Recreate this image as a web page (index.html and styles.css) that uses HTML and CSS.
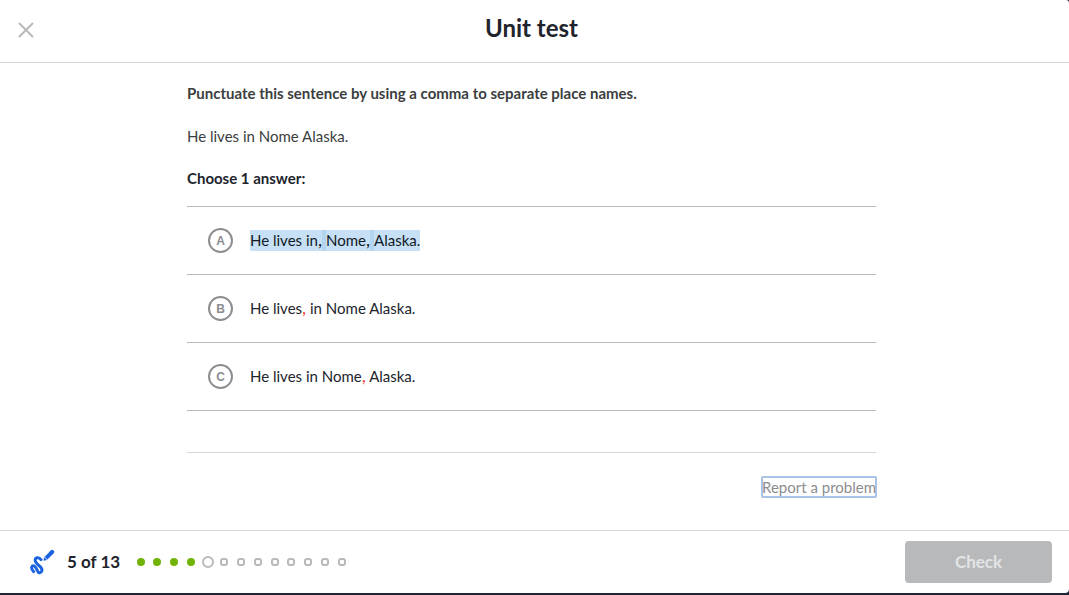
FILE: index.html
```html
<!DOCTYPE html>
<html lang="en">
<head>
<meta charset="utf-8">
<meta name="viewport" content="width=device-width, initial-scale=1">
<title>Unit test</title>
<link rel="stylesheet" href="styles.css">
</head>
<body>
<div class="page">
  <header class="header">
    <button class="close" type="button" aria-label="Close">
      <svg width="16" height="16" viewBox="0 0 16 16" fill="none" stroke="currentColor" stroke-width="2" stroke-linecap="round"><path d="M1.5 1.5l13 13M14.5 1.5l-13 13"/></svg>
    </button>
    <h1 class="title">Unit test</h1>
  </header>

  <main class="main">
    <form class="exercise" id="exercise">
      <p class="prompt">Punctuate this sentence by using a comma to separate place names.</p>
      <p class="sentence">He lives in Nome Alaska.</p>
      <fieldset class="choices">
        <legend class="instructions">Choose 1 answer:</legend>
        <label class="choice">
          <span class="marker"><input class="radio" type="radio" name="answer"><span class="letter">A</span></span>
          <span class="answer"><span class="selected">He lives in<span class="comma-wide">,</span><span class="overlap"> </span>Nome<span class="comma-wide">,</span><span class="overlap"> </span>Alaska.</span></span>
        </label>
        <label class="choice">
          <span class="marker"><input class="radio" type="radio" name="answer"><span class="letter">B</span></span>
          <span class="answer">He lives<span class="comma">,</span> in Nome Alaska.</span>
        </label>
        <label class="choice">
          <span class="marker"><input class="radio" type="radio" name="answer"><span class="letter">C</span></span>
          <span class="answer">He lives in Nome<span class="comma">,</span> Alaska.</span>
        </label>
      </fieldset>
      <div class="report-row"><a class="report" href="#report">Report a problem</a></div>
    </form>
  </main>

  <footer class="footer">
    <button class="scratchpad" type="button" aria-label="Show scratchpad">
      <svg width="26" height="28" viewBox="0 0 26 28" fill="none" stroke="currentColor" stroke-linecap="round" stroke-linejoin="round">
        <path stroke-width="3" d="M4.6 23.6C2.8 21.4 2 19.4 3.2 18.2C4.8 16.8 6.4 18.6 7.4 20.6C8.6 22.8 8.8 25 10.6 24.8C13 24.4 13.6 21.8 12.2 19.8C10.4 17.6 6.6 15.4 6.2 12.6C6 9.6 9.6 8.4 12 11.6"/>
        <path stroke-width="4" stroke-linecap="butt" d="M16.8 10.4L23 4.2"/>
        <path stroke-width="4" d="M22.4 4.6l.8-.8"/>
        <path fill="currentColor" stroke="none" d="M14.4 12.8l.8-3.8 3 3z"/>
        <path stroke="#fff" stroke-width=".6" stroke-linecap="butt" d="M15.4 8.8l3 3"/>
      </svg>
    </button>
    <span class="count">5 of 13</span>
    <ol class="progress" aria-label="Question 5 of 13">
      <li class="dot done"></li><li class="dot done"></li><li class="dot done"></li><li class="dot done"></li>
      <li class="dot current"></li>
      <li class="dot"></li><li class="dot"></li><li class="dot"></li><li class="dot"></li>
      <li class="dot"></li><li class="dot"></li><li class="dot"></li><li class="dot"></li>
    </ol>
    <button class="check" type="submit" form="exercise" disabled>Check</button>
  </footer>
</div>
</body>
</html>
```
FILE: styles.css
```css
* {
  box-sizing: border-box;
}

body {
  margin: 0;
  background: #1f2535;
  color: #21242c;
  font-family: Lato, "Noto Sans", sans-serif;
  font-size: 15px;
  line-height: 22px;
}

button {
  border: 0;
  padding: 0;
  background: none;
  font: inherit;
}

.page {
  display: flex;
  flex-direction: column;
  min-height: calc(100vh - 2px);
  border-radius: 0 3px 4px 0;
  background: #fff;
}

.header {
  display: grid;
  grid-template-columns: 48px 1fr 48px;
  align-items: center;
  padding: 14px 6px 20px 0;
  border-bottom: 1px solid #d6d6d8;
}

.close {
  display: flex;
  justify-self: start;
  margin: 4px 0 0 18px;
  color: #b8b9bb;
}

.title {
  margin: 0;
  font-size: 24px;
  line-height: 28px;
  text-align: center;
}

.main {
  flex: 1;
  padding: 19px 193px 32px 187px;
}

.prompt,
.sentence {
  margin: 0 0 21px;
  color: #3b3e40;
}

.prompt {
  font-weight: 700;
}

.sentence {
  margin-bottom: 20px;
}

.choices {
  min-width: 0;
  margin: 0;
  padding: 0 0 41px;
  border: 0;
  border-bottom: 1px solid #d6d6d8;
}

.instructions {
  padding: 0;
  margin-bottom: 17px;
  font-weight: 700;
}

.choice {
  display: flex;
  align-items: center;
  gap: 17px;
  padding: 21px;
  border-bottom: 1px solid #b8b9bb;
}

.choice:first-of-type {
  border-top: 1px solid #b8b9bb;
}

.marker {
  display: grid;
  place-items: center;
}

.answer {
  padding-bottom: 2px;
}

.radio,
.letter {
  grid-area: 1 / 1;
}

.radio {
  appearance: none;
  width: 25px;
  height: 25px;
  margin: 0;
  border: 2px solid #8c8d91;
  border-radius: 50%;
}

.letter {
  color: #8c8d91;
  font-family: "Liberation Sans", sans-serif;
  font-size: 12px;
  font-weight: 700;
  line-height: 12px;
}

.selected {
  display: inline-block;
  background: #c7e0f5;
  color: #111a26;
  line-height: 21px;
}

.overlap {
  display: inline-block;
  width: 4px;
  height: 21px;
  background: #b4d5f0;
  vertical-align: top;
}

.comma-wide,
.comma {
  font-size: 18px;
  line-height: 15px;
}

.comma {
  color: #f0483e;
}

.report-row {
  display: flex;
  justify-content: flex-end;
  padding-top: 24px;
}

.report {
  border-radius: 1px;
  outline: 2px solid #a9c3e6;
  outline-offset: -1px;
  color: #8c8d91;
  line-height: 20px;
  text-decoration: none;
}

.footer {
  display: flex;
  align-items: center;
  padding: 10px 17px 10px 29px;
  border-top: 1px solid #d6d6d8;
}

.scratchpad {
  display: flex;
  color: #1b62e0;
}

.count {
  margin-left: 12px;
  padding-bottom: 1px;
  font-size: 17px;
  font-weight: 700;
}

.progress {
  display: grid;
  grid-template-columns: repeat(13, 1fr);
  place-items: center;
  width: 218px;
  margin: 0 auto 0 12px;
  padding: 0;
  list-style: none;
}

.dot {
  width: 8px;
  height: 8px;
  border: 2px solid #b8b9bb;
  border-radius: 3px;
}

.done {
  border-color: #71b307;
  border-radius: 4px;
  background: #71b307;
}

.current {
  width: 12px;
  height: 12px;
  border-radius: 50%;
}

.check {
  width: 147px;
  height: 42px;
  padding-bottom: 1px;
  border-radius: 4px;
  background: #b8b9bb;
  color: #e3e4e5;
  font-size: 17px;
  font-weight: 700;
}
```
